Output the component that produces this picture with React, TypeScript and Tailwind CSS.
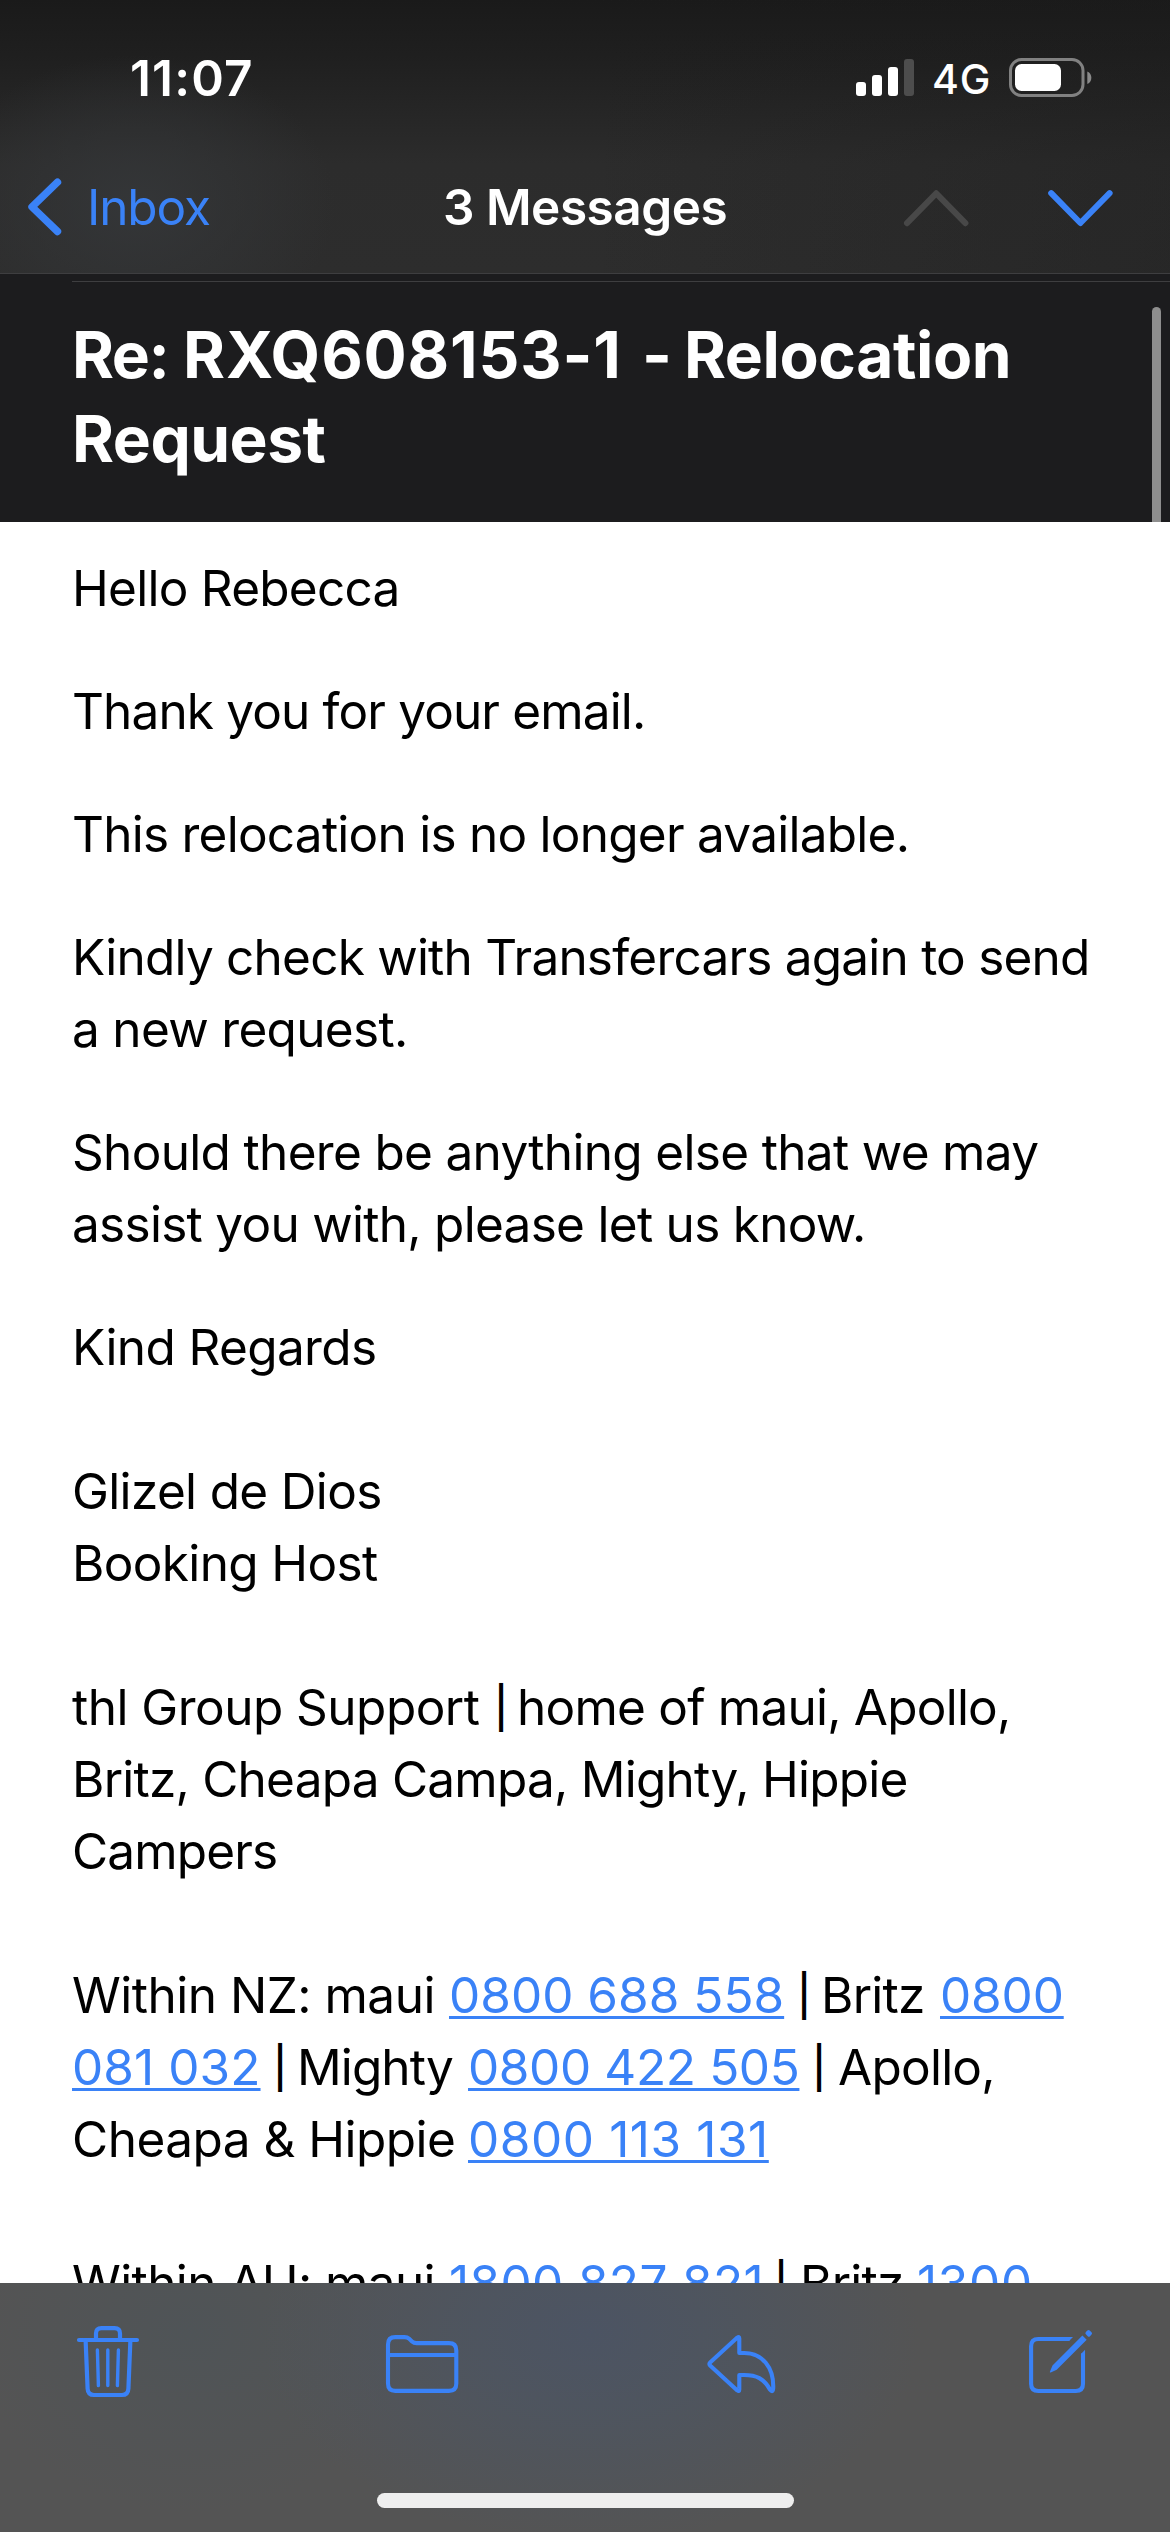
import type { ReactNode } from "react";

function StatusBar() {
  return (
    <div className="flex h-[141px] pt-[42px]">
      <div className="ml-[130px] w-[726px] text-[49.5px] font-semibold leading-[72px] tracking-[1.17px] text-white">11:07</div>
      <svg className="mt-[14px] h-[44px] w-[60px]" viewBox="856 56 60 44">
        <rect x="856" y="82" width="10" height="14" rx="3" fill="#fff" />
        <rect x="872" y="75" width="10" height="21" rx="3" fill="#fff" />
        <rect x="888" y="67" width="10" height="29" rx="3" fill="#fff" />
        <rect x="904" y="59" width="10" height="37" rx="3" fill="#4d4d4d" />
      </svg>
      <div className="ml-[16px] w-[75px] text-[41px] font-medium leading-[74px] tracking-[0.8px] text-white">4G</div>
      <svg className="mt-[14px] h-[44px] w-[88px]" viewBox="1007 56 88 44">
        <rect x="1010.5" y="59.5" width="72.5" height="36" rx="11" fill="none" stroke="#818181" strokeWidth="3" />
        <rect x="1015" y="64" width="46" height="27" rx="6.5" fill="#fff" />
        <path d="M1087.3 71.5c5.4 2 5.4 10.6 0 12.6z" fill="#8a8a8a" />
      </svg>
    </div>
  );
}

function NavBar() {
  return (
    <div className="flex h-[132px] pt-[30px]">
      <svg className="ml-[24px] h-[72px] w-[63px]" viewBox="24 171 63 72" fill="none" stroke="#3a82f7" strokeWidth="7.4" strokeLinecap="round" strokeLinejoin="round">
        <path d="M57.5 182.2 32 206.8 57.5 231.5" />
      </svg>
      <div className="w-[356px] text-[49.5px] leading-[72px] tracking-[-1.1px] text-[#3a82f7]">Inbox</div>
      <div className="w-[457px] text-[49.5px] font-semibold leading-[72px] tracking-[-0.5px] text-white">3 Messages</div>
      <svg className="h-[72px] w-[220px]" viewBox="900 171 220 72" fill="none" strokeWidth="6" strokeLinecap="round" strokeLinejoin="round">
        <path d="M907 223.2 936.2 193.3 965.4 223.2" stroke="#484848" />
        <path d="M1051.2 193.2 1080.4 223 1109.6 193.2" stroke="#3a82f7" />
      </svg>
    </div>
  );
}

function Phone({ children, className }: { children: ReactNode; className: string }) {
  return (
    <a className={`underline decoration-[3.4px] underline-offset-[3px] [text-decoration-skip-ink:none] text-[#3a82f7] ${className}`}>{children}</a>
  );
}

function Pipe() {
  return <span className="inline-block w-[20px] text-center text-[41px] font-medium">|</span>;
}

function Toolbar() {
  return (
    <footer className="h-[249px] shrink-0 bg-[#545454] bg-[radial-gradient(ellipse_330px_210px_at_590px_50px,#4c5463_0%,#4d5561cc_40%,transparent_100%),radial-gradient(ellipse_220px_180px_at_190px_50px,#4f5457_0%,transparent_100%)] pt-[39px]">
      <div className="flex justify-between px-[76px]">
        <svg className="h-[76px] w-[64px]" viewBox="76 2322 64 76" fill="none" stroke="#3a82f7" strokeWidth="4.2" strokeLinecap="round" strokeLinejoin="round">
          <path d="M79 2340H137M96 2340v-6.5q0-5.4 5.4-5.4h13.2q5.4 0 5.4 5.4v6.5" />
          <path d="M85.6 2340l2 48.6q.3 6.4 6.4 6.4h28q6.1 0 6.4-6.4l2-48.6" />
          <path d="M97.4 2350l1 35.6M107.8 2350v35.6M118.4 2350l-1 35.6" strokeWidth="3.4" />
        </svg>
        <svg className="h-[76px] w-[76px]" viewBox="384 2322 76 76" fill="none" stroke="#3a82f7" strokeWidth="4.1" strokeLinejoin="round">
          <path d="M388 2344.4q0-7.3 7.3-7.3h9.2q2.8 0 4.7 1.7l2.8 2.6q1.9 1.7 4.7 1.7h32.3q7.3 0 7.3 7.3v33.2q0 7.3-7.3 7.3h-53.7q-7.3 0-7.3-7.3zM388 2355h68.3" />
        </svg>
        <svg className="h-[76px] w-[76px]" viewBox="704 2322 76 76" fill="none" stroke="#3a82f7" strokeWidth="4.1" strokeLinejoin="round">
          <path d="M739.3 2353v-14.4q0-2.4-2-1l-27.2 25q-1.5 1.4 0 2.8l27.2 25q2 1.4 2-1V2375h5c12 0 19.5 3.5 25.6 14.4q2.9 3.8 3.3-1c.8-21-11-35.400-28.900-35.400z" />
        </svg>
        <svg className="h-[76px] w-[70px]" viewBox="1024 2322 70 76" fill="none" stroke="#3a82f7" strokeWidth="4.1">
          <path d="M1069.500 2339H1038.300q-7.200 0-7.200 7.200v37.600q0 7.200 7.200 7.200h37.500q7.200 0 7.200-7.200V2353.500" />
          <path d="M1069 2341.050l4-4.100h-4zM1080.950 2354l4.100-4.200v4.200z" fill="#3a82f7" stroke="none" />
          <path d="M1049.900 2371.800l2.600-6.300 29.900-29.900 4.300 4.200-30 29.900-6 2.700q-1.100.3-.8-.6z" fill="#3a82f7" stroke="none" />
          <rect x="1085.800" y="2330.600" width="5.800" height="5.400" rx="1.600" transform="rotate(45 1088.700 2333.300)" fill="#3a82f7" stroke="none" />
        </svg>
      </div>
      <div className="mx-auto mt-[95px] h-[15px] w-[417px] rounded-full bg-[#eeeeee]" />
    </footer>
  );
}

export default function App() {
  return (
    <div className="flex h-[2532px] w-[1170px] flex-col overflow-hidden bg-white font-['Inter',sans-serif]">
      <header className="h-[274px] shrink-0 border-b border-[#3e3e40] bg-[radial-gradient(ellipse_200px_150px_at_135px_205px,#343638_0%,transparent_100%),linear-gradient(90deg,transparent_50%,#1c1c1c55_100%),linear-gradient(180deg,#1a1a1a_0%,#1f1f1f_20%,#2c2c2c_60%,#2d2d2d_100%)]">
        <StatusBar />
        <NavBar />
      </header>

      <section className="relative h-[248px] shrink-0 bg-[#1c1c1e] pt-[7px]">
        <div className="ml-[72px] h-px bg-[#3e3e40]" />
        <h1 className="ml-[72px] whitespace-pre pt-[31px] text-[64px] font-bold leading-[84px] text-white">
          <span className="flex">
            <span className="w-[111px] tracking-[-1.5px]">Re: </span>
            <span className="w-[459px] tracking-[0.85px]">RXQ608153-1 </span>
            <span className="w-[42px]">- </span>
            <span className="tracking-[-0.4px]">Relocation</span>
          </span>
          <span className="block tracking-[-0.5px]">Request</span>
        </h1>
        <div className="absolute top-[33px] right-[9px] h-[215px] w-[9px] rounded-t-full bg-[#8e8e8e]" />
      </section>

      <main className="min-h-0 flex-1 overflow-hidden whitespace-pre pt-[30px] pl-[72px] text-[49.5px] leading-[72px] text-black">
        <p className="mb-[51px] tracking-[-0.74px]">Hello Rebecca</p>
        <p className="mb-[51px] tracking-[-0.86px]">Thank you for your email.</p>
        <p className="mb-[51px] tracking-[-0.75px]">This relocation is no longer available.</p>
        <p className="mb-[51px]">
          <span className="block tracking-[-0.78px]">Kindly check with Transfercars again to send</span>
          <span className="block tracking-[-0.68px]">a new request.</span>
        </p>
        <p className="mb-[51px]">
          <span className="block tracking-[-0.67px]">Should there be anything else that we may</span>
          <span className="block tracking-[-0.71px]">assist you with, please let us know.</span>
        </p>
        <p className="mb-[72px] tracking-[-0.62px]">Kind Regards</p>
        <p className="mb-[72px]">
          <span className="block tracking-[-0.66px]">Glizel de Dios</span>
          <span className="block tracking-[-0.64px]">Booking Host</span>
        </p>
        <div className="mb-[72px]">
          <div className="flex">
            <span className="w-[419px] tracking-[-0.52px]">thl Group Support </span>
            <Pipe />
            <span className="ml-[6px] tracking-[-0.77px]">home of maui, Apollo,</span>
          </div>
          <p className="tracking-[-0.76px]">Britz, Cheapa Campa, Mighty, Hippie</p>
          <p className="tracking-[-0.85px]">Campers</p>
        </div>
        <div className="mb-[72px]">
          <div className="flex">
            <span className="w-[377px] tracking-[-0.5px]">Within NZ: maui </span>
            <Phone className="w-[345px] tracking-[0.02px]">0800 688 558</Phone>
            <Pipe />
            <span className="ml-[7px] w-[119px] tracking-[-0.73px]">Britz </span>
            <Phone className="tracking-[-0.15px]">0800</Phone>
          </div>
          <div className="flex">
            <Phone className="w-[198px] tracking-[0.09px]">081 032</Phone>
            <Pipe />
            <span className="ml-[7px] w-[171px] tracking-[-0.9px]">Mighty </span>
            <Phone className="w-[341px] tracking-[-0.375px]">0800 422 505</Phone>
            <Pipe />
            <span className="ml-[9px] tracking-[-0.75px]">Apollo,</span>
          </div>
          <div className="flex">
            <span className="w-[396px] tracking-[-0.52px]">Cheapa &amp; Hippie </span>
            <Phone className="tracking-[0.58px]">0800 113 131</Phone>
          </div>
        </div>
        <div className="flex">
          <span className="w-[377px] tracking-[-0.6px]">Within AU: maui </span>
          <Phone className="w-[322px] tracking-[0.35px]">1800 827 821</Phone>
          <Pipe />
          <span className="ml-[9px] w-[117px] tracking-[-0.73px]">Britz </span>
          <Phone className="tracking-[0.69px]">1300</Phone>
        </div>
      </main>

      <Toolbar />
    </div>
  );
}
